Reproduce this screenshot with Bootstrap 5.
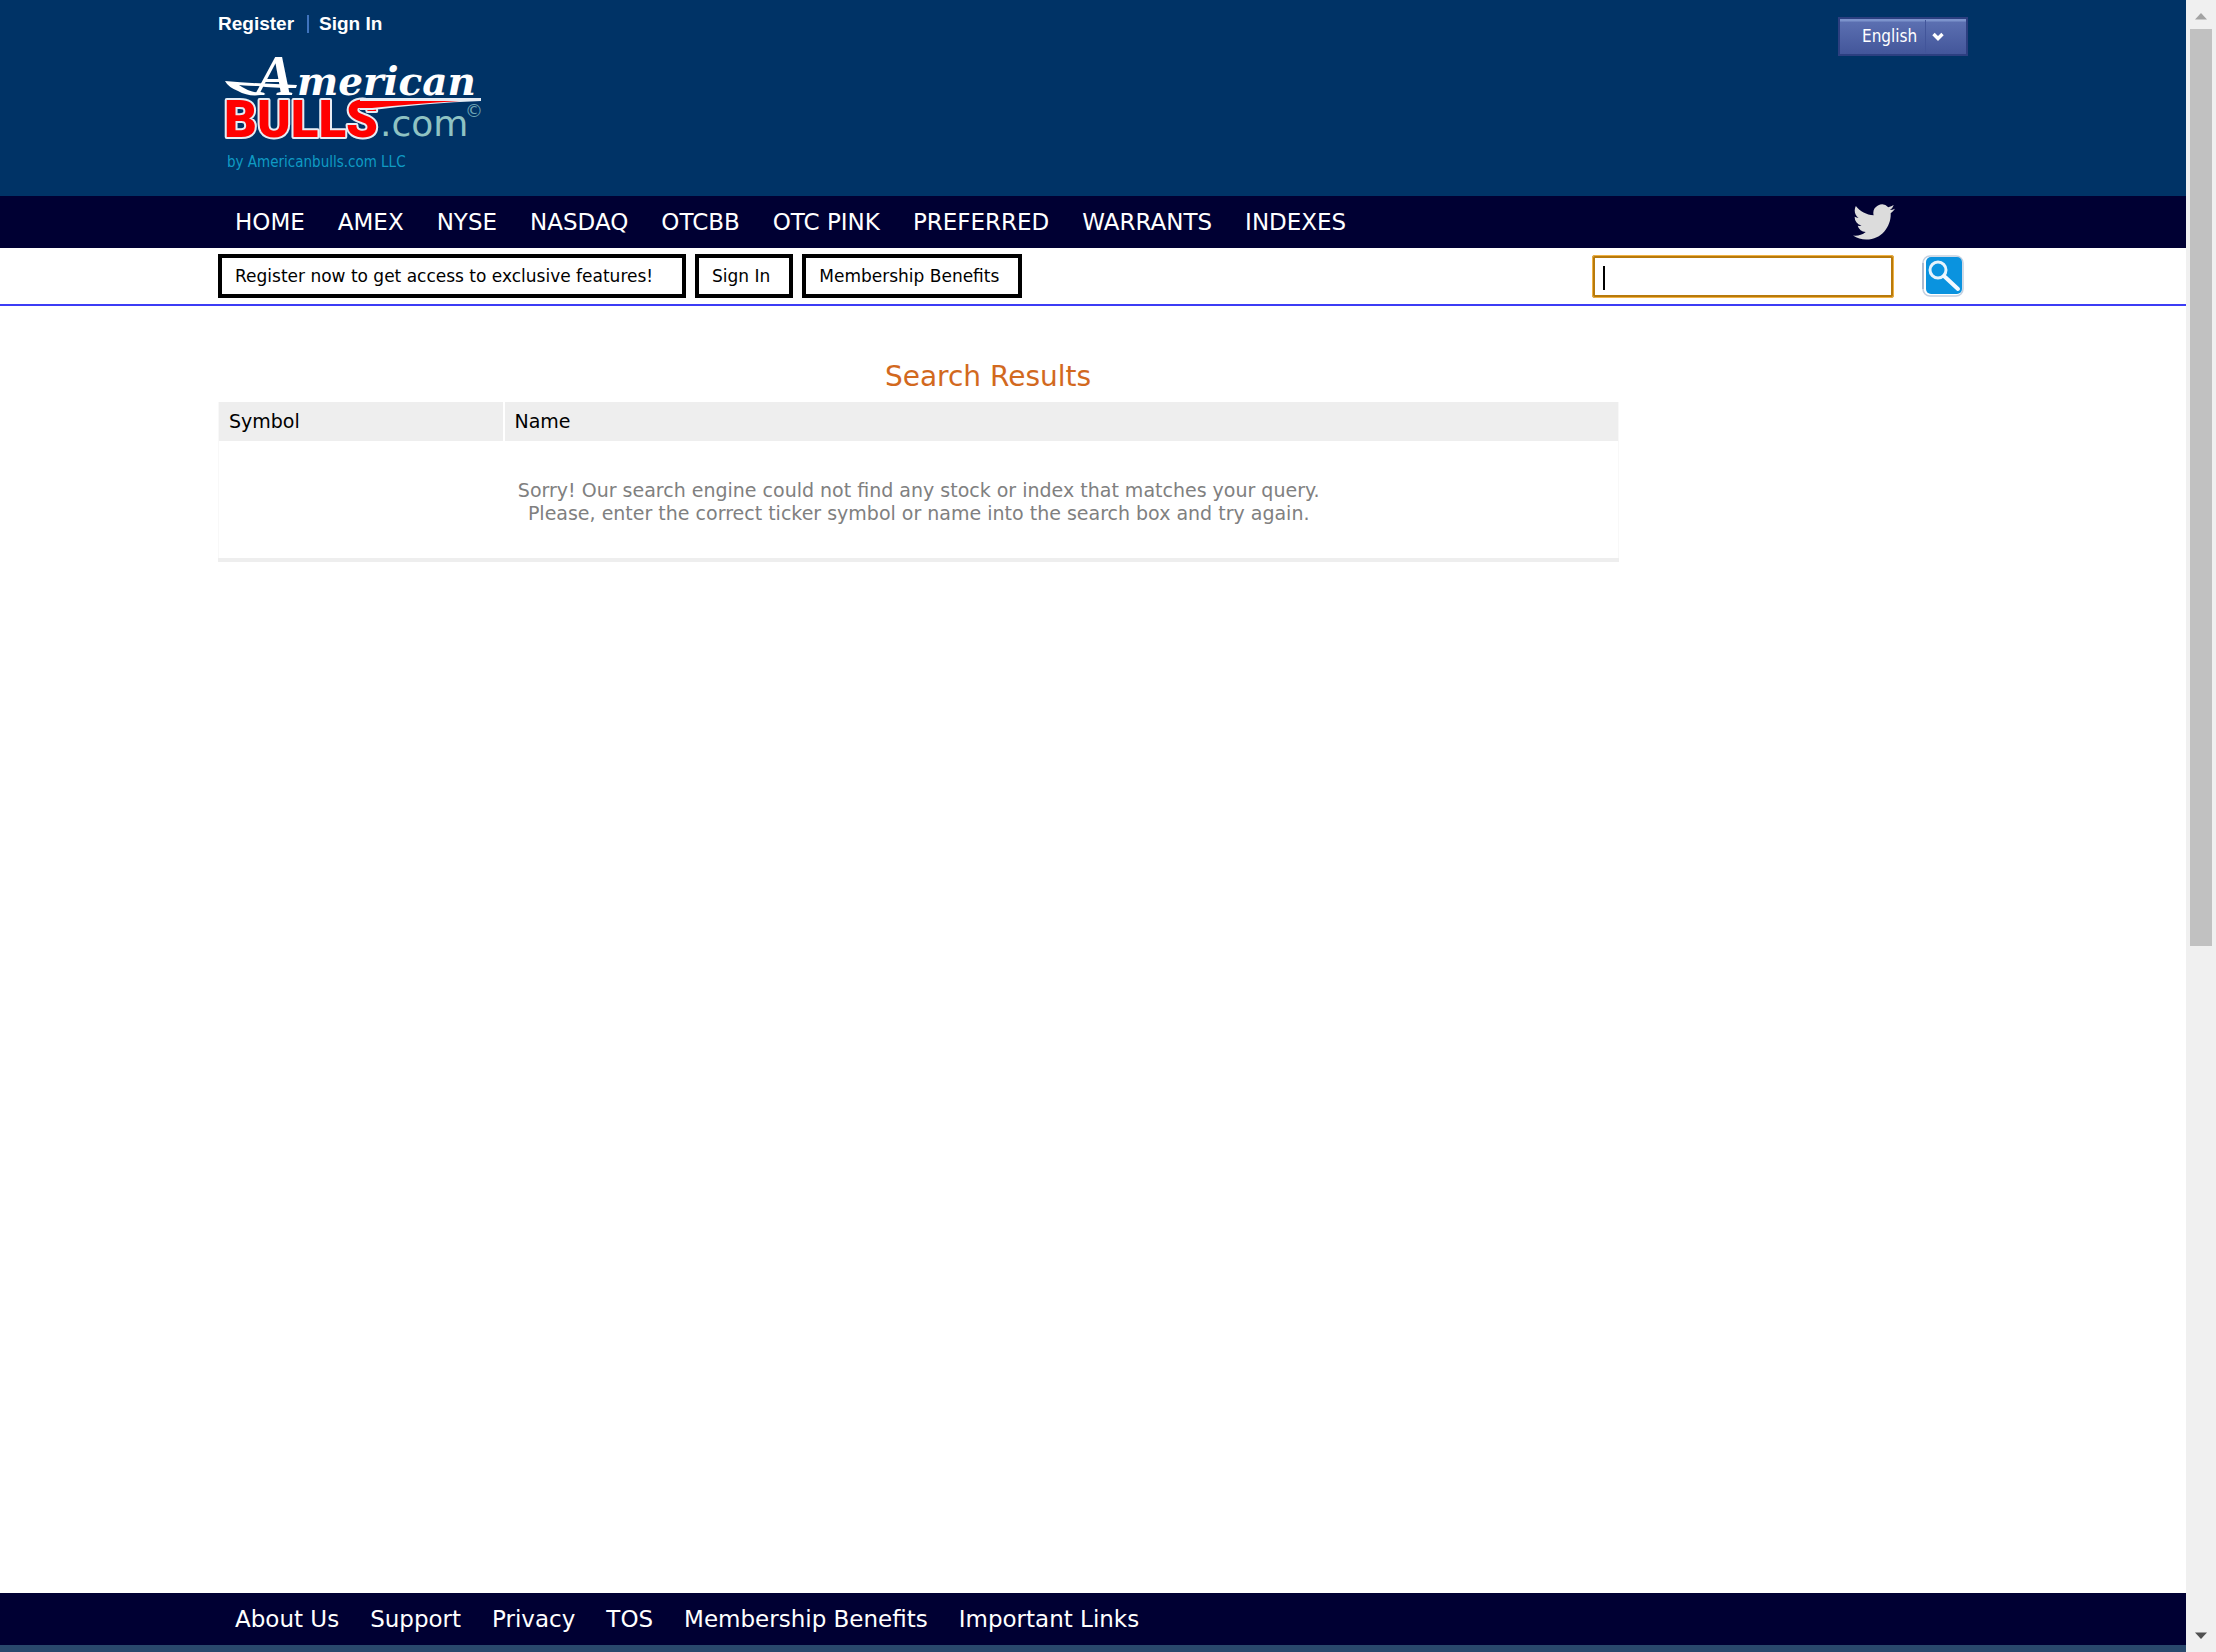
<!DOCTYPE html>
<html lang="en">
<head>
<meta charset="utf-8">
<meta name="viewport" content="width=device-width, initial-scale=1">
<title>Americanbulls.com - Search Results</title>
<link rel="stylesheet" href="https://cdn.jsdelivr.net/npm/bootstrap@5.3.0/dist/css/bootstrap.min.css">
<style>
  body { font-family: "DejaVu Sans", Verdana, sans-serif; background: #fff; color: #000; }
  a { color: inherit; text-decoration: none; }
  .site-wrap { width: 80%; max-width: 1750px; min-width: 1100px; margin: 0 auto; }
  @media (min-width: 2000px) { .site-wrap { width: 1750px; } }
  .top-band { background: #003366; min-height: 196px; }
  .account-links { font: bold 19px/24px "Liberation Sans", Arial, sans-serif; color: #fff; padding-top: 12px; }
  .account-links a + a { border-left: 2px solid #3f73bd; margin-left: 13px; padding-left: 10px; line-height: 18px; }
  .brand-link { display: block; margin-top: 16px; margin-left: 4px; }
  .brand-link svg { display: block; overflow: visible; }
  .byline { font: 15px/20px "DejaVu Sans Condensed", "DejaVu Sans", sans-serif; color: #0f9bc4; margin: 10px 0 0 9px; }
  .lang-btn { margin-top: 17px; width: 130px; height: 39px; border: 2px solid #2c3f80; border-radius: 0;
    background: linear-gradient(#7c93cc 0, #7c93cc 2px, #5b6fb1 3px, #43569a 100%); color: #fff; padding: 0;
    font: 17px/20px "DejaVu Sans Condensed", "DejaVu Sans", sans-serif; }
  .lang-btn .lang-name { width: 86px; padding-left: 22px; text-align: left; border-right: 1px solid #42559a; line-height: 33px; }
  .lang-btn .lang-arrow { width: 24px; line-height: 0; }
  .nav-band { background: #000033; color: #fff; font-size: 23px; line-height: 52px; }
  .nav-band a { white-space: nowrap; }
  .nav-items { gap: 33px; padding-left: 17px; }
  footer .nav-items { gap: 31px; }
  .bird-link { margin-right: 73px; line-height: 0; }
  .tool-band { border-bottom: 2px solid #3c3cf5; height: 58px; padding-top: 6px; }
  .box-link { border: 4px solid #000; padding: 0 19px 0 13px; font-size: 17px; line-height: 36px; white-space: nowrap; }
  .box-link-wide { min-width: 468px; }
  .tool-left { gap: 9px; }
  .search-box { width: 302px; height: 43px; border: 3px solid #b87a0c; outline: 1px solid #f0b244; outline-offset: -1px; border-radius: 3px;
    padding: 0 9px; font-size: 20px; caret-color: transparent;
    background: linear-gradient(#000, #000) 8px 8px / 2px 24px no-repeat, #fff; }
  .search-box:focus { outline: 1px solid #f0b244; }
  .search-btn { border: 0; background: none; padding: 0; margin-left: 28px; margin-right: 4px; line-height: 0; }
  .result-area { width: 88%; padding-top: 51px; }
  .result-title { color: #d2691e; font-size: 28px; line-height: 40px; margin: 0 0 5px; }
  .result-frame { width: 91%; }
  .result-table { width: 100%; border-collapse: collapse; font-size: 19px; line-height: 23px; border-bottom: 4px solid #eee;
    border-left: 1px solid #f8f8f8; border-right: 1px solid #f8f8f8; }
  .result-table th { background: #eee; font-weight: 400; padding: 8px 10px; border-right: 2px solid #fff; }
  .result-table th:last-child { border-right: 0; }
  .result-table .sym-col { width: 285px; }
  .result-table td { color: #808080; padding: 38px 0 33px; text-align: center; }
  .foot-strip { background: #29486c; height: 7px; }
  .scroll-track { width: 30px; background: #f0f0f0; padding: 13px 4px; }
  .scroll-track svg { display: block; margin: 0 auto; }
  .scroll-thumb { height: 55.5vh; margin: 9px 0 auto; background: #c1c1c1; }
</style>
<script src="https://cdn.jsdelivr.net/npm/bootstrap@5.3.0/dist/js/bootstrap.bundle.min.js"></script>
</head>
<body class="d-flex min-vh-100">
<div class="d-flex flex-column flex-grow-1">
  <header class="top-band">
    <div class="site-wrap d-flex justify-content-between align-items-start">
      <div>
        <div class="account-links d-flex align-items-center"><a href="#">Register</a><a href="#">Sign In</a></div>
        <a class="brand-link" href="#" aria-label="Americanbulls.com home">
          <svg width="262" height="90" viewBox="0 0 262 90">
            <path d="M3 29 Q38 32 75 33 L74 36 Q50 36 36 34 Q30 34 17 33 Q28 41 44 42 Q28 46 16 39 Q6 35 3 29Z" fill="#fff"/>
            <text x="34" y="43" font-family="Liberation Serif, serif" font-style="italic" font-weight="bold" font-size="58" fill="#fff">A</text>
            <text x="75" y="43" font-family="DejaVu Serif, serif" font-style="italic" font-weight="bold" font-size="39" fill="#fff">merican</text>
            <text x="2" y="85" font-family="Roboto, sans-serif" font-weight="900" font-size="51" fill="#f00" stroke="#e6ecf4" stroke-width="4" paint-order="stroke" stroke-linejoin="round">BULLS</text>
            <path d="M138 46 H259 V49 Q205 51 151 58 H138Z" fill="#e6ecf4"/>
            <path d="M134 49 H238 Q190 52 150 56 H134Z" fill="#f00"/>
            <text x="158" y="84" font-family="DejaVu Sans, sans-serif" font-size="36" fill="#8fc3c3">.com</text>
            <text x="243" y="65" font-family="DejaVu Sans, sans-serif" font-size="18" fill="#6fa5b5">©</text>
          </svg>
        </a>
        <p class="byline">by Americanbulls.com LLC</p>
      </div>
      <button type="button" class="lang-btn d-flex align-items-center">
        <span class="lang-name">English</span>
        <span class="lang-arrow"><svg width="12" height="9" viewBox="0 0 12 9"><path d="M1.5 2 L6 6.5 L10.5 2" fill="none" stroke="#fff" stroke-width="3.4"/></svg></span>
      </button>
    </div>
  </header>
  <nav class="nav-band" aria-label="Markets">
    <div class="site-wrap d-flex justify-content-between align-items-center">
      <div class="nav-items d-flex">
        <a href="#">HOME</a><a href="#">AMEX</a><a href="#">NYSE</a><a href="#">NASDAQ</a><a href="#">OTCBB</a><a href="#">OTC PINK</a><a href="#">PREFERRED</a><a href="#">WARRANTS</a><a href="#">INDEXES</a>
      </div>
      <a class="bird-link" href="#" aria-label="Twitter"><svg width="42" height="36" viewBox="0 2 24 20" preserveAspectRatio="none"><path fill="#dcdcdc" d="M23.95 4.57a10 10 0 0 1-2.82.77 4.96 4.96 0 0 0 2.16-2.72c-.95.55-2 .96-3.13 1.18a4.92 4.92 0 0 0-8.38 4.48C7.69 8.09 4.07 6.13 1.64 3.16a4.82 4.82 0 0 0-.67 2.47c0 1.71.87 3.21 2.19 4.1a4.9 4.9 0 0 1-2.23-.62v.06a4.92 4.92 0 0 0 3.95 4.83 5 5 0 0 1-2.21.08 4.94 4.94 0 0 0 4.6 3.42A9.87 9.87 0 0 1 0 19.54a13.99 13.99 0 0 0 7.55 2.21c9.05 0 14-7.5 14-13.98 0-.21 0-.42-.02-.63a9.94 9.94 0 0 0 2.46-2.55z"/></svg></a>
    </div>
  </nav>
  <div class="tool-band">
    <div class="site-wrap d-flex justify-content-between">
      <div class="tool-left d-flex">
        <a class="box-link box-link-wide" href="#">Register now to get access to exclusive features!</a>
        <a class="box-link" href="#">Sign In</a>
        <a class="box-link" href="#">Membership Benefits</a>
      </div>
      <form class="d-flex align-items-center">
        <input class="search-box" type="text" aria-label="Search symbol or name">
        <button class="search-btn" type="button" aria-label="Search">
          <svg width="42" height="42" viewBox="0 0 42 42"><rect x="1" y="1" width="40" height="40" rx="7" fill="#fff" stroke="#c4d0e0" stroke-width="1.5"/><path d="M1 8V34" stroke="#9fb0c8" stroke-width="1.5"/><rect x="4" y="2" width="36" height="37" rx="5" fill="#0a93df"/><circle cx="16" cy="15" r="8" fill="none" stroke="#e6f3fc" stroke-width="3"/><path d="M22 21 L36 34" stroke="#f2f9ff" stroke-width="4" stroke-linecap="round"/></svg>
        </button>
      </form>
    </div>
  </div>
  <main class="flex-grow-1">
    <div class="site-wrap">
      <div class="result-area">
        <h1 class="result-title text-center fw-normal">Search Results</h1>
        <div class="result-frame">
          <table class="result-table">
            <thead><tr><th class="sym-col" scope="col">Symbol</th><th scope="col">Name</th></tr></thead>
            <tbody><tr><td colspan="2">Sorry! Our search engine could not find any stock or index that matches your query.<br>Please, enter the correct ticker symbol or name into the search box and try again.</td></tr></tbody>
          </table>
        </div>
      </div>
    </div>
  </main>
  <footer>
    <nav class="nav-band" aria-label="Site information">
      <div class="site-wrap">
        <div class="nav-items d-flex">
          <a href="#">About Us</a><a href="#">Support</a><a href="#">Privacy</a><a href="#">TOS</a><a href="#">Membership Benefits</a><a href="#">Important Links</a>
        </div>
      </div>
    </nav>
    <div class="foot-strip"></div>
  </footer>
</div>
<div class="scroll-track d-flex flex-column" aria-hidden="true">
  <svg width="12" height="7" viewBox="0 0 12 7"><path d="M0 6.500 L6 0 L12 6.500Z" fill="#a3a3a3"/></svg>
  <div class="scroll-thumb"></div>
  <svg width="12" height="7" viewBox="0 0 12 7"><path d="M0 .5 L6 7 L12 .5Z" fill="#505050"/></svg>
</div>
</body>
</html>
